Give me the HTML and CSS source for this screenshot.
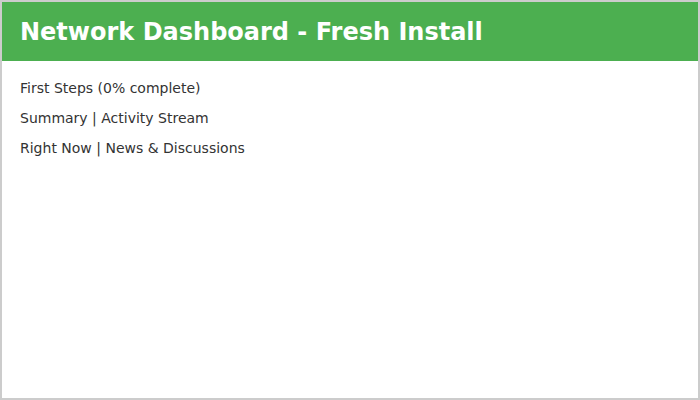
FILE: index.html
```html
<!DOCTYPE html>
<html>
<head>
<meta charset="utf-8">
<link rel="stylesheet" href="styles.css">
</head>
<body>
<div class="frame">
  <header class="header">
    <h1 class="title">Network Dashboard - Fresh Install</h1>
  </header>
  <main class="content">
    <div class="line">First Steps (0% complete)</div>
    <div class="line">Summary | Activity Stream</div>
    <div class="line">Right Now | News &amp; Discussions</div>
  </main>
</div>
</body>
</html>
```
FILE: styles.css
```css
html, body {
  margin: 0;
  padding: 0;
  background: #ffffff;
}
.frame {
  box-sizing: border-box;
  width: 700px;
  height: 400px;
  border: 2px solid #cccccc;
  font-family: "DejaVu Sans", sans-serif;
}
.header {
  height: 59px;
  background: #4caf50;
  display: flex;
  align-items: center;
  padding: 0 18px;
}
.title {
  margin: 0;
  color: #ffffff;
  font-size: 24px;
  font-weight: bold;
}
.content {
  padding: 12px 18px;
}
.line {
  font-size: 14px;
  line-height: 30px;
  color: #333333;
}
```
